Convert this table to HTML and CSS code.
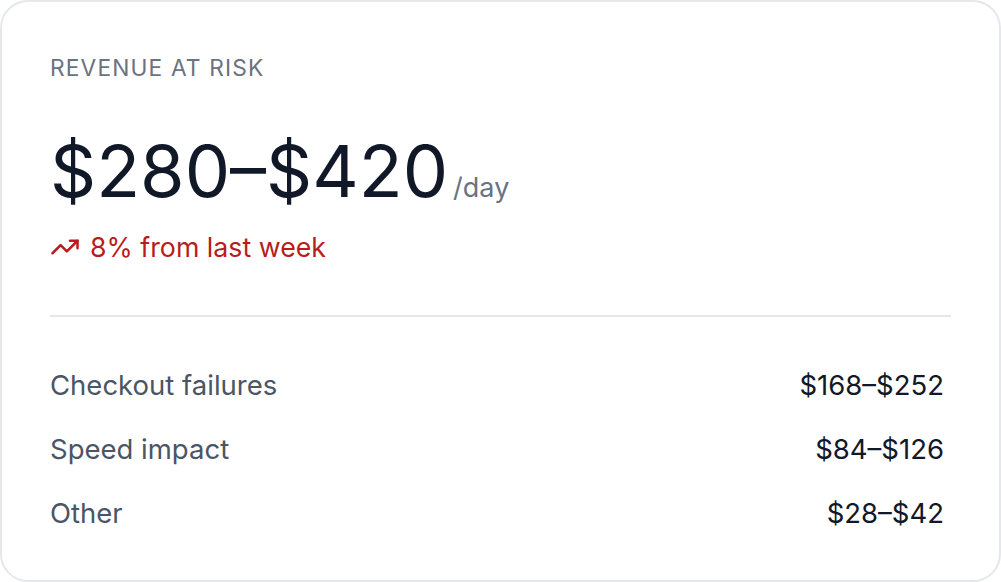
FILE: index.html
```html
<!DOCTYPE html>
<html lang="en">
<head>
<meta charset="utf-8">
<title>Revenue at risk</title>
<link rel="stylesheet" href="styles.css">
</head>
<body>
<section class="card">
  <h2 class="eyebrow">Revenue at risk</h2>
  <div class="headline">
    <span class="amount">$280–$420</span><span class="unit">/day</span>
  </div>
  <div class="trend">
    <svg class="trend-icon" viewBox="0 0 24 24" fill="none" stroke="currentColor" stroke-width="2" stroke-linecap="round" stroke-linejoin="round" aria-hidden="true">
      <polyline points="22 7 13.5 15.5 8.5 10.5 2 17"></polyline>
      <polyline points="16 7 22 7 22 13"></polyline>
    </svg>
    <span>8% from last week</span>
  </div>
  <hr class="divider">
  <ul class="breakdown">
    <li class="row"><span class="row-label">Checkout failures</span><span class="row-value">$168–$252</span></li>
    <li class="row"><span class="row-label">Speed impact</span><span class="row-value">$84–$126</span></li>
    <li class="row"><span class="row-label">Other</span><span class="row-value">$28–$42</span></li>
  </ul>
</section>
</body>
</html>
```

FILE: styles.css
```css
html, body {
  margin: 0;
  padding: 0;
  background: #ffffff;
}

body {
  font-family: Inter, "Noto Sans", "Liberation Sans", sans-serif;
}

.card {
  box-sizing: border-box;
  width: 1001px;
  height: 582px;
  border: 2px solid #e5e7eb;
  border-radius: 28px;
  padding: 48px 48px;
  display: flex;
  flex-direction: column;
  background: #ffffff;
}

.eyebrow {
  margin: 4px 0 0;
  font-size: 22.75px;
  line-height: 28px;
  font-weight: 400;
  letter-spacing: 0.05em;
  text-transform: uppercase;
  color: #6b7280;
}

.headline {
  margin-top: 49px;
  display: flex;
  align-items: baseline;
  gap: 5px;
}

.amount {
  font-size: 72px;
  line-height: 80px;
  font-weight: 400;
  color: #111827;
}

.unit {
  font-size: 27px;
  color: #6b7280;
}

.trend {
  margin-top: 18px;
  display: flex;
  align-items: center;
  gap: 10px;
  color: #b91c1c;
  font-size: 26.75px;
  line-height: 36px;
}

.trend-icon {
  width: 30px;
  height: 30px;
  flex: none;
}

.divider {
  margin: 50px 0 0;
  border: 0;
  border-top: 2px solid #e5e7eb;
}

.breakdown {
  list-style: none;
  margin: 50px 0 0;
  padding: 0;
  display: flex;
  flex-direction: column;
  gap: 28px;
}

.row {
  display: flex;
  justify-content: space-between;
  align-items: baseline;
  font-size: 27.5px;
  line-height: 36px;
}

.row-label {
  color: #4b5563;
}

.row-value {
  color: #111827;
  padding-right: 7px;
}
```
